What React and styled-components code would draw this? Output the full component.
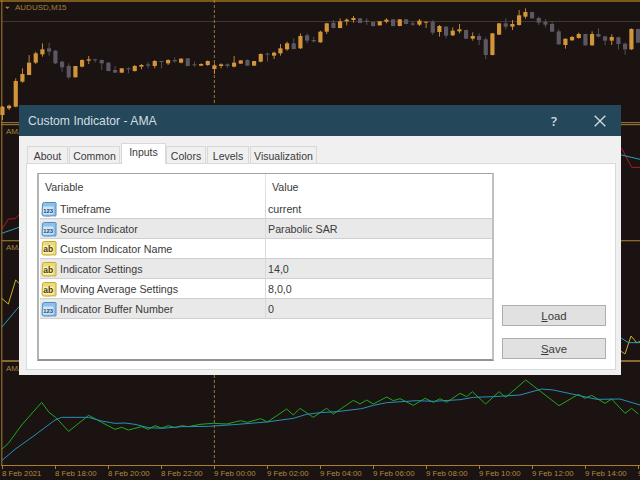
import React from "react";
import styled, { createGlobalStyle } from "styled-components";

const Global = createGlobalStyle`
  html, body { margin: 0; padding: 0; background: #1a1311; }
  * { box-sizing: border-box; }
`;

const Stage = styled.div`
  position: relative;
  width: 640px;
  height: 480px;
  overflow: hidden;
  background: #1a1311;
  font-family: "Liberation Sans", Arial, sans-serif;
  display: flex;
  flex-direction: column;
`;
const Pane = styled.div`
  position: relative;
  flex: none;
  height: ${(p) => p.$h}px;
`;
const PaneSvg = styled.svg`
  display: block;
  width: 640px;
  height: 100%;
`;
const PaneLabel = styled.span`
  position: absolute;
  left: ${(p) => p.$left}px;
  top: ${(p) => p.$top}px;
  font-size: 8px;
  line-height: 10px;
  color: #a5823a;
  white-space: nowrap;
`;
const TimeAxis = styled.div`
  flex: none;
  height: 15px;
  display: flex;
  padding-left: 1px;
  border-top: 1px solid #a87f2e;
  margin-left: 1px;
`;
const TimeCell = styled.div`
  flex: none;
  width: 53px;
  font-size: 7.8px;
  line-height: 10px;
  color: #b08a3c;
  white-space: nowrap;
  &::before {
    content: "";
    display: block;
    width: 1px;
    height: 3px;
    background: #a87f2e;
  }
`;

const Dialog = styled.div`
  position: absolute;
  left: 19px;
  top: 105px;
  width: 602px;
  height: 270px;
  background: #f0f0f0;
  display: flex;
  flex-direction: column;
`;
const TitleBar = styled.div`
  flex: none;
  height: 31px;
  background: #24475a;
  display: flex;
  align-items: center;
  padding: 0 15px 0 9px;
  color: #d3dde2;
`;
const Title = styled.div`
  flex: 1;
  font-size: 12.2px;
`;
const HelpButton = styled.span`
  font-size: 13px;
  font-weight: 600;
  color: #c9d5db;
  margin-right: 37px;
  font-family: "Noto Sans", sans-serif;
`;
const CloseIcon = styled.svg`
  display: block;
  width: 12px;
  height: 12px;
`;
const Tabs = styled.div`
  flex: none;
  height: 21px;
  margin: 7px 0 0 8px;
  display: flex;
  align-items: flex-end;
  gap: 1px;
  position: relative;
  z-index: 1;
`;
const Tab = styled.div`
  width: ${(p) => p.$w}px;
  height: ${(p) => (p.$active ? 21 : 18)}px;
  margin-right: ${(p) => (p.$active ? -1 : 0)}px;
  background: ${(p) => (p.$active ? "#ffffff" : "#f0f0f0")};
  border: 1px solid #d9d9d9;
  border-bottom: ${(p) => (p.$active ? "none" : "1px solid #d9d9d9")};
  font-size: 10.5px;
  color: #3a3a3a;
  text-align: center;
  line-height: ${(p) => (p.$active ? 17 : 18)}px;
  white-space: nowrap;
`;
const Panel = styled.div`
  flex: none;
  width: 590px;
  height: 207px;
  margin: -1px 0 0 7px;
  background: #fff;
  border: 1px solid #d9d9d9;
  display: flex;
  padding: 9px 0 0 10px;
`;
const Table = styled.div`
  flex: none;
  width: 457px;
  height: 188px;
  border-top: 1px solid #a3a3a3;
  border-left: 2px solid #b4b4b4;
  border-right: 2px solid #c0c0c4;
  border-bottom: 2px solid #939393;
  padding-left: 1px;
`;
const Row = styled.div`
  display: grid;
  grid-template-columns: 225px 1fr;
  height: ${(p) => (p.$header ? 25 : 20)}px;
  background: ${(p) => (p.$shade ? "#e9e9e9" : "#fff")};
  border-bottom: ${(p) => (p.$header ? "none" : "1px solid #cfcfcf")};
  font-size: 10.7px;
  color: #3a3a3a;
  align-items: center;
`;
const VarCell = styled.div`
  display: flex;
  align-items: center;
  gap: 3px;
  padding-left: 1px;
  height: 100%;
  white-space: nowrap;
`;
const HeadCell = styled.div`
  padding-left: ${(p) => p.$pad}px;
  height: 100%;
  line-height: 26px;
  border-left: ${(p) => (p.$sep ? "1px solid #e2e2e2" : "none")};
`;
const ValCell = styled.div`
  padding-left: 2px;
  height: 100%;
  line-height: 20px;
  border-left: 1px solid #d9d9d9;
`;
const Side = styled.div`
  flex: none;
  width: 104px;
  margin-left: 8px;
  height: 188px;
  display: flex;
  flex-direction: column;
  justify-content: flex-end;
  gap: 12px;
  padding-bottom: 2px;
`;
const Button = styled.div`
  height: 21px;
  background: #e1e1e1;
  border: 1px solid #adadad;
  font-size: 11.4px;
  color: #3a3a3a;
  text-align: center;
  line-height: 20px;
`;
const IconSvg = styled.svg`
  flex: none;
  display: block;
  width: 16px;
  height: 17px;
`;

const CANDLES = [
  [7,318,360,320,345,1],[27,314,330,317,325,1],[47,235,322,243,320,1],[67,205,248,222,245,1],[87,165,225,188,225,1],[107,155,192,160,188,1],[127,130,170,148,163,1],[147,128,167,145,155,0],[166,150,192,152,190,0],[186,182,215,185,202,0],[206,190,238,198,232,0],[226,198,232,198,232,1],[246,178,202,180,200,1],[266,168,192,178,182,1],[285,176,188,178,181,0],[305,178,210,180,190,0],[325,186,214,188,213,0],[345,198,218,210,218,0],[365,205,218,205,218,1],[385,202,220,205,208,0],[404,195,215,198,213,1],[424,192,208,195,200,1],[444,186,205,193,197,0],[464,180,205,183,198,1],[484,183,205,183,186,0],[504,178,195,180,190,1],[524,172,188,180,184,0],[543,175,190,176,188,1],[563,174,199,175,198,0],[583,185,200,193,196,0],[603,190,198,192,197,1],[623,181,198,183,195,1],[643,190,222,196,207,1],[663,190,205,193,198,1],[682,190,203,193,198,0],[702,168,202,188,200,1],[722,181,191,181,191,1],[742,178,198,180,197,0],[762,183,197,183,197,1],[782,160,187,162,185,1],[802,158,185,161,164,0],[822,155,177,158,167,1],[841,132,167,145,160,1],[861,125,152,130,148,1],[881,115,148,130,147,0],[901,100,147,108,145,1],[921,100,130,106,122,0],[941,110,128,120,124,0],[961,92,128,95,127,1],
  [980,68,102,70,95,1],[1000,60,85,68,84,0],[1020,55,85,64,84,1],[1040,55,76,59,64,1],[1060,48,68,54,60,1],[1080,54,70,55,69,0],[1100,55,75,62,66,0],[1119,65,80,66,78,0],[1139,63,77,64,76,1],[1159,55,70,59,65,1],[1179,57,79,58,78,0],[1199,57,79,58,78,1],[1218,57,73,58,72,0],[1238,64,78,70,74,0],[1258,57,78,62,74,1],[1278,65,84,65,68,1],[1298,60,105,65,98,0],[1318,75,110,78,96,1],[1338,78,115,80,107,0],[1358,82,108,92,106,1],[1378,72,100,88,94,1],[1398,89,117,90,116,0],[1418,97,122,108,116,1],[1437,100,135,108,120,0],[1457,112,178,118,165,0],[1477,99,166,100,165,1],[1497,69,105,70,104,1],[1517,55,88,70,80,0],[1537,60,90,72,80,1],[1557,30,77,46,75,1],[1576,25,56,36,50,1],[1596,35,56,36,55,0],[1616,50,75,54,68,0],[1636,58,82,66,74,0],[1656,65,96,72,95,0],[1676,88,135,94,133,0],[1696,116,146,116,135,1],[1716,108,122,111,121,1],[1736,98,116,102,114,1],[1756,101,137,102,136,0],[1776,94,137,102,136,1],[1795,85,112,102,110,0],[1815,108,136,109,122,0],[1835,103,135,111,122,1],[1855,110,148,112,132,0],[1875,128,164,131,148,0],[1894,85,150,87,148,1],[1914,86,129,87,128,0],
];

const pts = (a, dx = 0, dy = 0) => a.map(([x, y]) => `${x + dx},${y + dy}`).join(" ");

const GREEN = [[5,268],[25,250],[65,195],[125,127],[147,157],[167,172],[206,214],[266,166],[305,187],[345,208],[365,202],[385,210],[425,200],[445,208],[465,197],[485,204],[505,197],[525,203],[545,197],[565,200],[600,193],[640,190],[680,192],[722,182],[742,187],[782,176],[802,186],[860,147],[880,165],[900,145],[940,172],[960,158],[980,145],[1000,162],[1060,121],[1080,132],[1100,120],[1120,132],[1160,111],[1180,122],[1200,116],[1240,136],[1275,115],[1300,127],[1320,116],[1340,127],[1380,100],[1400,110],[1417,95],[1457,132],[1497,95],[1517,112],[1577,60],[1677,137],[1735,103],[1755,115],[1775,106],[1815,130],[1835,117],[1875,160],[1895,145],[1915,162]];
const BLUE = [[5,302],[45,268],[105,225],[165,180],[185,172],[265,172],[305,183],[345,190],[375,189],[405,193],[445,203],[485,205],[545,200],[625,199],[700,194],[800,186],[880,175],[920,163],[960,158],[1010,155],[1085,146],[1120,136],[1160,128],[1250,122],[1300,124],[1380,119],[1420,112],[1480,110],[1560,105],[1625,87],[1660,90],[1730,105],[1790,118],[1860,117],[1920,135]];

function Frame({ y0, h }) {
  return (
    <g>
      <rect x="4" y={y0} width="3" height={h} fill="#a87f2e" />
      <line x1="643" x2="643" y1={y0} y2={y0 + h} stroke="#b48a3a" strokeWidth="3" strokeDasharray="9 6" opacity="0.85" />
    </g>
  );
}

function IconScroll({ kind }) {
  const blue = kind === "123";
  const fill = blue ? "#8fc0ea" : "#efd976";
  const edge = blue ? "#4f8cc4" : "#c4a936";
  const ink = blue ? "#123f70" : "#4a3c08";
  return (
    <IconSvg viewBox="0 0 16 17">
      <path d="M1.5 3 C1.5 1.8 2.5 1.5 3.5 1.5 H14 C15 1.5 15.5 2.5 15 4 V14.5 C14 15.8 12.5 14.5 11 14.8 C8 15.4 5 15 2.8 15 C1.8 15 1 14.2 1 13 Z" fill={fill} stroke={edge} strokeWidth="1" />
      <rect x="2" y="5.5" width="10.5" height="8" rx="1" fill={blue ? "#cfe5f7" : "#fbf1bb"} />
      <text x="7.2" y="12" textAnchor="middle" fontFamily="Liberation Sans, sans-serif" fontWeight="700" fontSize={blue ? 5.8 : 8.5} fill={ink}>{kind}</text>
    </IconSvg>
  );
}

const ROWS = [
  ["123", "Timeframe", "current"],
  ["123", "Source Indicator", "Parabolic SAR"],
  ["ab", "Custom Indicator Name", ""],
  ["ab", "Indicator Settings", "14,0"],
  ["ab", "Moving Average Settings", "8,0,0"],
  ["123", "Indicator Buffer Number", "0"],
];
const TABS = [["About", 41], ["Common", 51], ["Inputs", 45, true], ["Colors", 40], ["Levels", 42], ["Visualization", 67]];
const TIMES = ["8 Feb 2021","8 Feb 18:00","8 Feb 20:00","8 Feb 22:00","9 Feb 00:00","9 Feb 02:00","9 Feb 04:00","9 Feb 06:00","9 Feb 08:00","9 Feb 10:00","9 Feb 12:00","9 Feb 14:00","9"];

export default function App() {
  return (
    <Stage>
      <Global />
      <Pane $h={122}>
        <PaneSvg viewBox="0 0 1920 366" preserveAspectRatio="none">
          <rect x="0" y="0" width="1920" height="6" fill="#7a5a1c" />
          <rect x="5" y="64" width="1915" height="2" fill="#54483c" />
          <Frame y0={0} h={366} />
          <path d="M15 20h14l-7 7z" fill="#b08a3c" />
          {CANDLES.map(([x, hi, lo, t, b, c]) => {
            const col = c ? "#d4953a" : "#5c5762";
            return (
              <g key={x} fill={col}>
                <rect x={x - 1} y={hi} width="2.6" height={lo - hi} />
                <rect x={x - 6} y={t} width="12.5" height={Math.max(b - t, 3)} />
              </g>
            );
          })}
        </PaneSvg>
        <PaneLabel $left={15} $top={3}>AUDUSD,M15</PaneLabel>
      </Pane>
      <Pane $h={118}>
        <PaneSvg viewBox="0 366 1920 354" preserveAspectRatio="none">
          <Frame y0={366} h={354} />
          <rect x="4" y="367" width="1916" height="2.4" fill="#c89a4a" />
          <rect x="4" y="373" width="1916" height="2.4" fill="#c89a4a" />
          <polyline points={pts([[5,690],[25,657],[45,656],[57,645],[1865,445],[1895,502],[1920,502]])} fill="none" stroke="#b01a24" strokeWidth="3" />
          <polyline points={pts([[5,700],[57,682],[1865,465],[1920,478]])} fill="none" stroke="#2c9cc0" strokeWidth="3" />
        </PaneSvg>
        <PaneLabel $left={6} $top={5}>AMA</PaneLabel>
      </Pane>
      <Pane $h={120}>
        <PaneSvg viewBox="0 720 1920 360" preserveAspectRatio="none">
          <Frame y0={720} h={360} />
          <rect x="4" y="720" width="1916" height="4" fill="#8a6a2c" />
          <polyline points={pts([[5,895],[25,912],[47,840],[57,850],[1865,1055],[1875,1062],[1893,1008],[1910,1028],[1920,1025]])} fill="none" stroke="#c8b02c" strokeWidth="3" />
          <polyline points={pts([[5,982],[57,920],[1865,1015],[1885,1028],[1920,1028]])} fill="none" stroke="#2c9cc0" strokeWidth="3" />
        </PaneSvg>
        <PaneLabel $left={6} $top={3}>AMA</PaneLabel>
      </Pane>
      <Pane $h={105}>
        <PaneSvg viewBox="0 1080 1920 315" preserveAspectRatio="none">
          <Frame y0={1080} h={315} />
          <rect x="4" y="1080" width="1916" height="6" fill="#8a6a2c" />
          <polyline points={pts(GREEN, 0, 1080)} fill="none" stroke="#20a820" strokeWidth="3" />
          <polyline points={pts(BLUE, 0, 1080)} fill="none" stroke="#2590bc" strokeWidth="3" />
        </PaneSvg>
        <PaneLabel $left={6} $top={4}>AMA</PaneLabel>
      </Pane>
      <TimeAxis>
        {TIMES.map((t) => <TimeCell key={t}>{t}</TimeCell>)}
      </TimeAxis>

      <Dialog>
        <TitleBar>
          <Title>Custom Indicator - AMA</Title>
          <HelpButton>?</HelpButton>
          <CloseIcon viewBox="0 0 12 12">
            <path d="M.7.7 11.3 11.3M11.3.7.7 11.3" stroke="#d3dde2" strokeWidth="1.3" fill="none" />
          </CloseIcon>
        </TitleBar>
        <Tabs>
          {TABS.map(([t, w, a]) => <Tab key={t} $w={w} $active={a}>{t}</Tab>)}
        </Tabs>
        <Panel>
          <Table>
            <Row $header>
              <HeadCell $pad={5}>Variable</HeadCell>
              <HeadCell $pad={6} $sep>Value</HeadCell>
            </Row>
            {ROWS.map(([k, n, v], i) => (
              <Row key={n} $shade={i % 2 === 1}>
                <VarCell><IconScroll kind={k} />{n}</VarCell>
                <ValCell>{v}</ValCell>
              </Row>
            ))}
          </Table>
          <Side>
            <Button><u>L</u>oad</Button>
            <Button><u>S</u>ave</Button>
          </Side>
        </Panel>
      </Dialog>
    </Stage>
  );
}
